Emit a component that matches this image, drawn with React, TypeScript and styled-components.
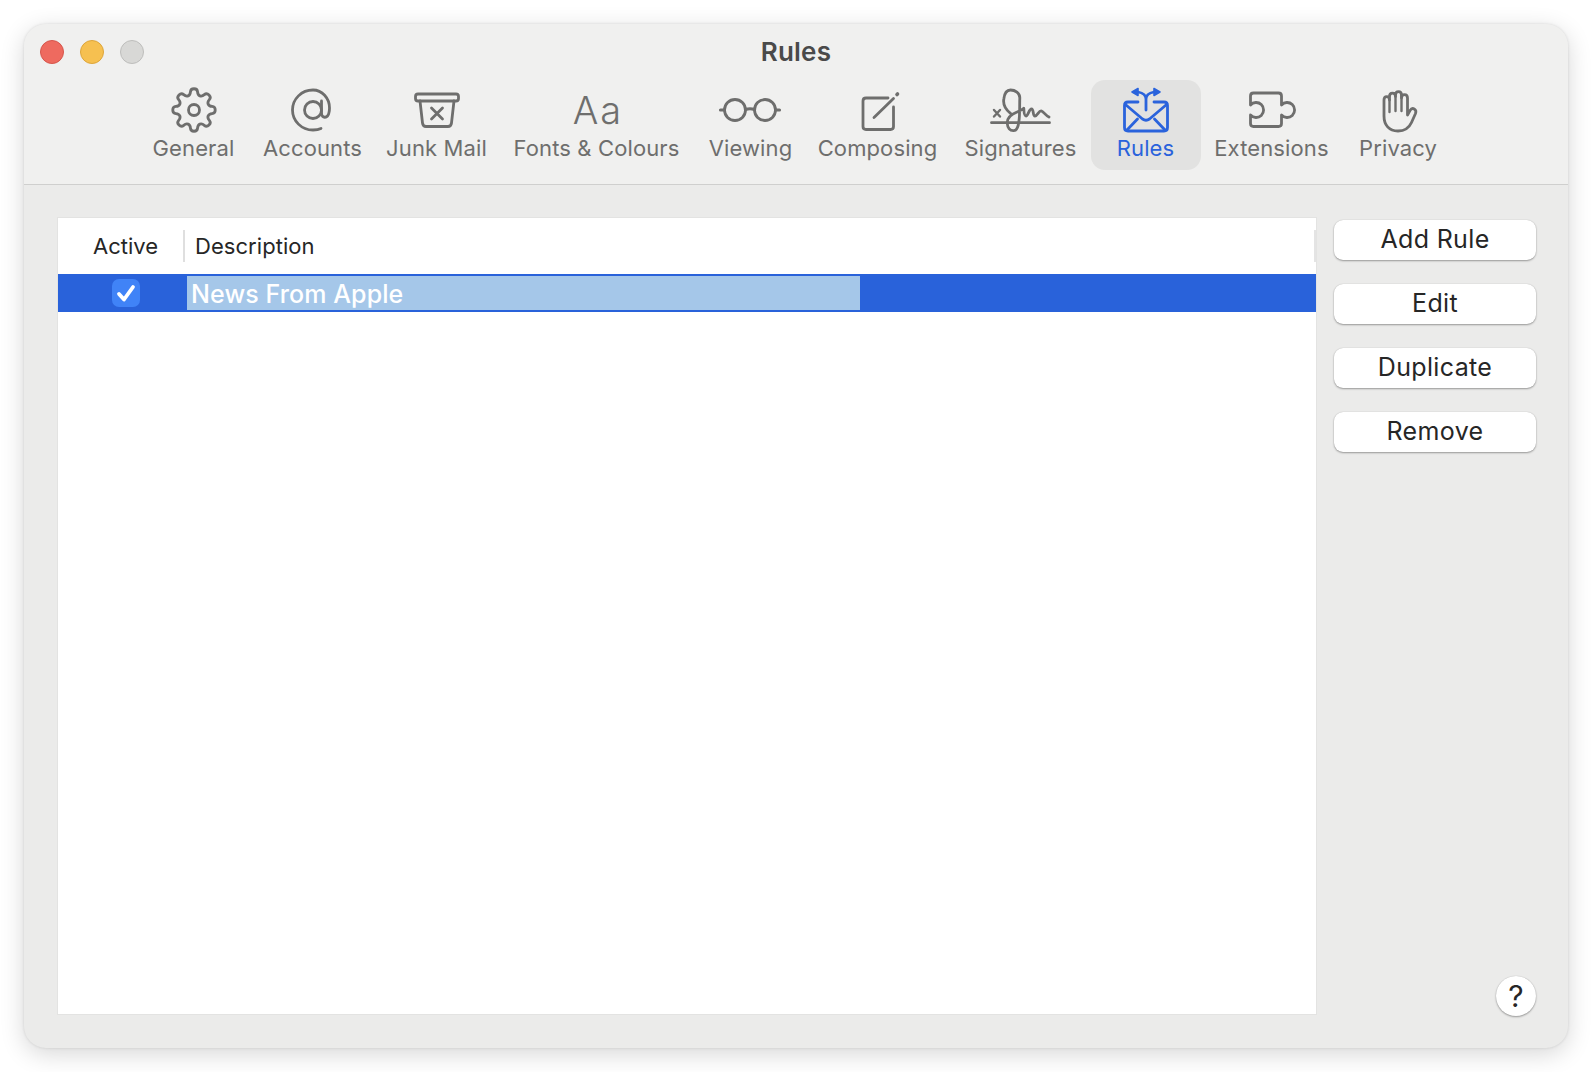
import React from 'react';
import styled, {createGlobalStyle} from 'styled-components';

const GlobalStyle = createGlobalStyle`
  html, body {
    margin: 0;
    padding: 0;
    background: #ffffff;
  }

  body {
    font-family: 'Inter', 'Liberation Sans', sans-serif;
  }
`;

const Page = styled.div`
  width: 1592px;
  height: 1072px;
  padding: 24px;
  box-sizing: border-box;
  overflow: hidden;
`;

const Window = styled.div`
  width: 1544px;
  height: 1024px;
  border-radius: 22px;
  background: #ebebea;
  box-shadow: 0 6px 24px rgba(0, 0, 0, 0.16), 0 0 3px rgba(0, 0, 0, 0.12);
  display: flex;
  flex-direction: column;
  overflow: hidden;
`;

const TitleBar = styled.header`
  height: 161px;
  flex: none;
  box-sizing: border-box;
  background: #f0f0ef;
  border-bottom: 1px solid #cfcfce;
  display: flex;
  flex-direction: column;
`;

const TopRow = styled.div`
  height: 56px;
  flex: none;
  display: grid;
  grid-template-columns: 1fr auto 1fr;
  align-items: center;
  padding: 0 16px;
`;

const Lights = styled.div`
  display: flex;
  gap: 16px;
`;

const Light = styled.span<{$fill: string; $edge: string}>`
  width: 24px;
  height: 24px;
  box-sizing: border-box;
  border-radius: 50%;
  background: ${({$fill}) => $fill};
  border: 1px solid ${({$edge}) => $edge};
`;

const Title = styled.h1`
  margin: 0;
  font-size: 26px;
  line-height: 30px;
  font-weight: 600;
  letter-spacing: 0.2px;
  color: #4a4a4a;
`;

const Toolbar = styled.nav`
  display: flex;
  justify-content: center;
`;

const ToolItem = styled.div<{$width: number; $active?: boolean}>`
  width: ${({$width}) => $width}px;
  height: 90px;
  box-sizing: border-box;
  border-radius: 14px;
  padding-top: 6px;
  display: flex;
  flex-direction: column;
  align-items: center;
  background: ${({$active}) => ($active ? '#e2e2e1' : 'transparent')};
  color: ${({$active}) => ($active ? '#2a63dc' : '#6e6e6d')};
`;

const ToolIcon = styled.svg`
  width: 56px;
  height: 48px;
  flex: none;
  fill: none;
  stroke: currentColor;
  stroke-width: 2.8;
  stroke-linecap: round;
  stroke-linejoin: round;
`;

const ToolLabel = styled.span`
  font-size: 22px;
  line-height: 28px;
  letter-spacing: 0.12px;
  white-space: nowrap;
`;

const Content = styled.main`
  flex: 1;
  min-height: 0;
  display: flex;
  padding: 33px 32px 34px 34px;
  gap: 18px;
`;

const Table = styled.section`
  width: 1258px;
  flex: none;
  background: #ffffff;
  box-shadow: 0 0 0 1px #e3e3e2;
  display: flex;
  flex-direction: column;
`;

const TableHeader = styled.div`
  height: 56px;
  flex: none;
  box-sizing: border-box;
  display: flex;
  align-items: center;
  position: relative;
  font-size: 22px;
  color: #262626;
`;

const ActiveHeading = styled.div`
  width: 127px;
  height: 32px;
  box-sizing: border-box;
  padding-left: 35px;
  line-height: 32px;
  border-right: 2px solid #dfdfdf;
`;

const DescriptionHeading = styled.div`
  padding-left: 10px;
  letter-spacing: 0.05px;
`;

const ColumnEnd = styled.span`
  position: absolute;
  right: 0;
  top: 12px;
  width: 2px;
  height: 32px;
  background: #e4e4e4;
`;

const SelectedRow = styled.div`
  height: 38px;
  flex: none;
  display: flex;
  align-items: center;
  background: #2962da;
`;

const CheckCell = styled.div`
  width: 129px;
  flex: none;
  display: flex;
  justify-content: center;
  padding-left: 6px;
  box-sizing: border-box;
`;

const CheckBox = styled.span`
  width: 28px;
  height: 28px;
  border-radius: 7px;
  background: #4083f7;
  display: flex;
  align-items: center;
  justify-content: center;
`;

const CheckMark = styled.svg`
  width: 24px;
  height: 24px;
  fill: none;
  stroke: #ffffff;
  stroke-width: 3.8;
  stroke-linecap: round;
  stroke-linejoin: round;
`;

const EditField = styled.div`
  width: 673px;
  height: 34px;
  box-sizing: border-box;
  padding-left: 4px;
  background: #a5c7e9;
  color: #ffffff;
  font-size: 25px;
  font-weight: 500;
  letter-spacing: 0.1px;
  line-height: 36px;
  white-space: nowrap;
`;

const Side = styled.aside`
  flex: 1;
  min-width: 0;
  display: flex;
  flex-direction: column;
  align-items: flex-end;
  padding-top: 2px;
`;

const Buttons = styled.div`
  width: 100%;
  display: flex;
  flex-direction: column;
  gap: 24px;
`;

const Button = styled.button`
  height: 40px;
  width: 100%;
  border: 0;
  padding: 0 0 2px;
  border-radius: 9px;
  background: #ffffff;
  box-shadow: 0 1px 2px rgba(0, 0, 0, 0.34), 0 0 1px rgba(0, 0, 0, 0.2);
  font-family: inherit;
  font-size: 25px;
  letter-spacing: 0.35px;
  color: #262626;
`;

const HelpButton = styled.button`
  margin-top: auto;
  margin-bottom: -2px;
  width: 40px;
  height: 40px;
  border: 0;
  padding: 0;
  border-radius: 50%;
  background: #ffffff;
  box-shadow: 0 1px 2px rgba(0, 0, 0, 0.34), 0 0 1px rgba(0, 0, 0, 0.2);
  font-family: inherit;
  font-size: 30px;
  color: #262626;
`;

const AaGlyph = styled.text`
  font-family: 'Inter', 'Liberation Sans', sans-serif;
  font-size: 38px;
  font-weight: 300;
  letter-spacing: 2px;
  fill: currentColor;
  stroke: none;
`;

// contour of the gear: eight rounded teeth, smoothed through the midpoints
const gearPath = () => {
    const points: [number, number][] = [];
    for (let i = 0; i < 8; i++) {
        const a = i * 45 - 90;
        [[a - 14, 15.5], [a - 9, 21.5], [a + 9, 21.5], [a + 14, 15.5]].forEach(([deg, r]) => {
            const rad = (deg * Math.PI) / 180;
            points.push([28 + r * Math.cos(rad), 24 + r * Math.sin(rad)]);
        });
    }
    const mid = (p: [number, number], q: [number, number]) =>
        `${((p[0] + q[0]) / 2).toFixed(2)} ${((p[1] + q[1]) / 2).toFixed(2)}`;
    let d = `M${mid(points[points.length - 1], points[0])}`;
    points.forEach((p, i) => {
        d += `Q${p[0].toFixed(2)} ${p[1].toFixed(2)} ${mid(p, points[(i + 1) % points.length])}`;
    });
    return d + 'z';
};

const icons: Record<string, React.ReactNode> = {
    General: (
        <>
            <path d={gearPath()}/>
            <circle cx="28" cy="24" r="5.5"/>
        </>
    ),
    Accounts: (
        <>
            <circle cx="28" cy="24" r="8.5"/>
            <path d="M36.5 15v12c0 6 6.5 5.500 7.500-.5.5-2 .5-3 .5-4.500C44.500 12 37 4 28 4 16.500 4 7.500 13 7.500 24S16.500 44 28 44c3.500 0 6-.5 8-1.500"/>
        </>
    ),
    'Junk Mail': (
        <>
            <rect x="6.500" y="8" width="43" height="7" rx="2.500"/>
            <path d="M11 15l2.500 22c.3 2.500 1.500 3.500 3.500 3.500h22c2 0 3.200-1 3.500-3.500L45 15"/>
            <path d="M22.500 22l11 11M33.500 22l-11 11"/>
        </>
    ),
    'Fonts & Colours': <AaGlyph x="29" y="38" textAnchor="middle">Aa</AaGlyph>,
    Viewing: (
        <>
            <circle cx="12" cy="24" r="10.500"/>
            <circle cx="42" cy="24" r="10.500"/>
            <path d="M22.500 23.500q4.500-1.500 9 0M-2.500 24h4M52.500 24h4" strokeWidth="3.200"/>
        </>
    ),
    Composing: (
        <>
            <path d="M38 12H16c-2 0-3 1-3 3v25.500c0 2 1 3 3 3h24.500c2 0 3-1 3-3V21"/>
            <path d="M24 31.500L43.500 12.500"/>
            <path d="M47 8.500l.5-.5" strokeWidth="3.600"/>
        </>
    ),
    Signatures: (
        <>
            <path d="M-1.500 36.700h58"/>
            <path d="M1 24l6 6.500M7 24l-6 6.500" strokeWidth="2.400"/>
            <path d="M17.500 27.300C12 23 10 18 10.800 13 11.500 7 14 4 17.500 4 22 4 27 7 26.800 12 26.500 20 27 30 25.800 36 25 42 23 44.700 20.800 44.700 17 45 14.500 42 14.200 37 14 31 19 28 24 26 26 25 29 24 30.800 22.300 31 26 31 30 33 30 35 30 36 23 38.500 23 41 23 39.500 30 42 30 44.500 30 46 24 48.500 25 51 26 52 29 56 31"/>
        </>
    ),
    Rules: (
        <>
            <path d="M20 16H10c-2.500 0-3.500 1-3.500 3.500v22c0 2.500 1 3.500 3.500 3.500h36c2.500 0 3.500-1 3.500-3.500v-22c0-2.500-1-3.500-3.500-3.500H36"/>
            <path d="M8 19l16.500 14c2.300 1.600 4.700 1.600 7 0L48 19"/>
            <path d="M9 44l10.500-11M47 44L36.500 33"/>
            <path d="M28 24V13c0-3.500-3-6-8-7M28 13c0-3.500 3-6 8-7"/>
            <path d="M14 6l6-3.500v7zM42 6l-6-3.500v7z" fill="currentColor" strokeWidth="1.600"/>
        </>
    ),
    Extensions: (
        <path d="M6.500 10c0-2 1-3 3-3h25c2 0 3 1 3 3v9a7.500 7.500 0 1 1 0 10v8.500c0 2-1 3-3 3h-25c-2 0-3-1-3-3V29a7.500 7.500 0 1 0 0-10z"/>
    ),
    Privacy: (
        <>
            <path d="M14 30V14c0-4.500 5.500-4.500 5.500 0v-3.500c0-4.500 6-4.500 6 0V9c0-4.500 6-4.500 6 0v3c0-4.500 6-4.500 6 0v17l2.500-4.500c2.500-4 7-1 5.500 3l-4 9C39 42 34 45 28 45c-9 0-14-6-14-15z"/>
            <path d="M19.500 14v12M25.500 10v15M31.500 9v16" strokeWidth="2.400"/>
        </>
    ),
};

const tools = [
    {label: 'General', width: 110},
    {label: 'Accounts', width: 128},
    {label: 'Junk Mail', width: 120},
    {label: 'Fonts & Colours', width: 200},
    {label: 'Viewing', width: 108},
    {label: 'Composing', width: 146},
    {label: 'Signatures', width: 140},
    {label: 'Rules', width: 110, active: true},
    {label: 'Extensions', width: 142},
    {label: 'Privacy', width: 111},
];

const actions = ['Add Rule', 'Edit', 'Duplicate', 'Remove'];

const App: React.FC = () => {
    return (
        <>
            <GlobalStyle/>
            <Page>
                <Window>
                    <TitleBar>
                        <TopRow>
                            <Lights>
                                <Light $fill="#ee6a5f" $edge="#d5564c"/>
                                <Light $fill="#f6c050" $edge="#dda53b"/>
                                <Light $fill="#d8d8d6" $edge="#bdbdbb"/>
                            </Lights>
                            <Title>Rules</Title>
                        </TopRow>
                        <Toolbar>
                            {tools.map((tool) => (
                                <ToolItem key={tool.label} $width={tool.width} $active={tool.active}>
                                    <ToolIcon viewBox="0 0 56 48" overflow="visible">{icons[tool.label]}</ToolIcon>
                                    <ToolLabel>{tool.label}</ToolLabel>
                                </ToolItem>
                            ))}
                        </Toolbar>
                    </TitleBar>
                    <Content>
                        <Table>
                            <TableHeader>
                                <ActiveHeading>Active</ActiveHeading>
                                <DescriptionHeading>Description</DescriptionHeading>
                                <ColumnEnd/>
                            </TableHeader>
                            <SelectedRow>
                                <CheckCell>
                                    <CheckBox>
                                        <CheckMark viewBox="0 0 24 24">
                                            <path d="M5 13l5 5.500L19 6"/>
                                        </CheckMark>
                                    </CheckBox>
                                </CheckCell>
                                <EditField>News From Apple</EditField>
                            </SelectedRow>
                        </Table>
                        <Side>
                            <Buttons>
                                {actions.map((name) => (
                                    <Button key={name}>{name}</Button>
                                ))}
                            </Buttons>
                            <HelpButton>?</HelpButton>
                        </Side>
                    </Content>
                </Window>
            </Page>
        </>
    );
};

export default App;
